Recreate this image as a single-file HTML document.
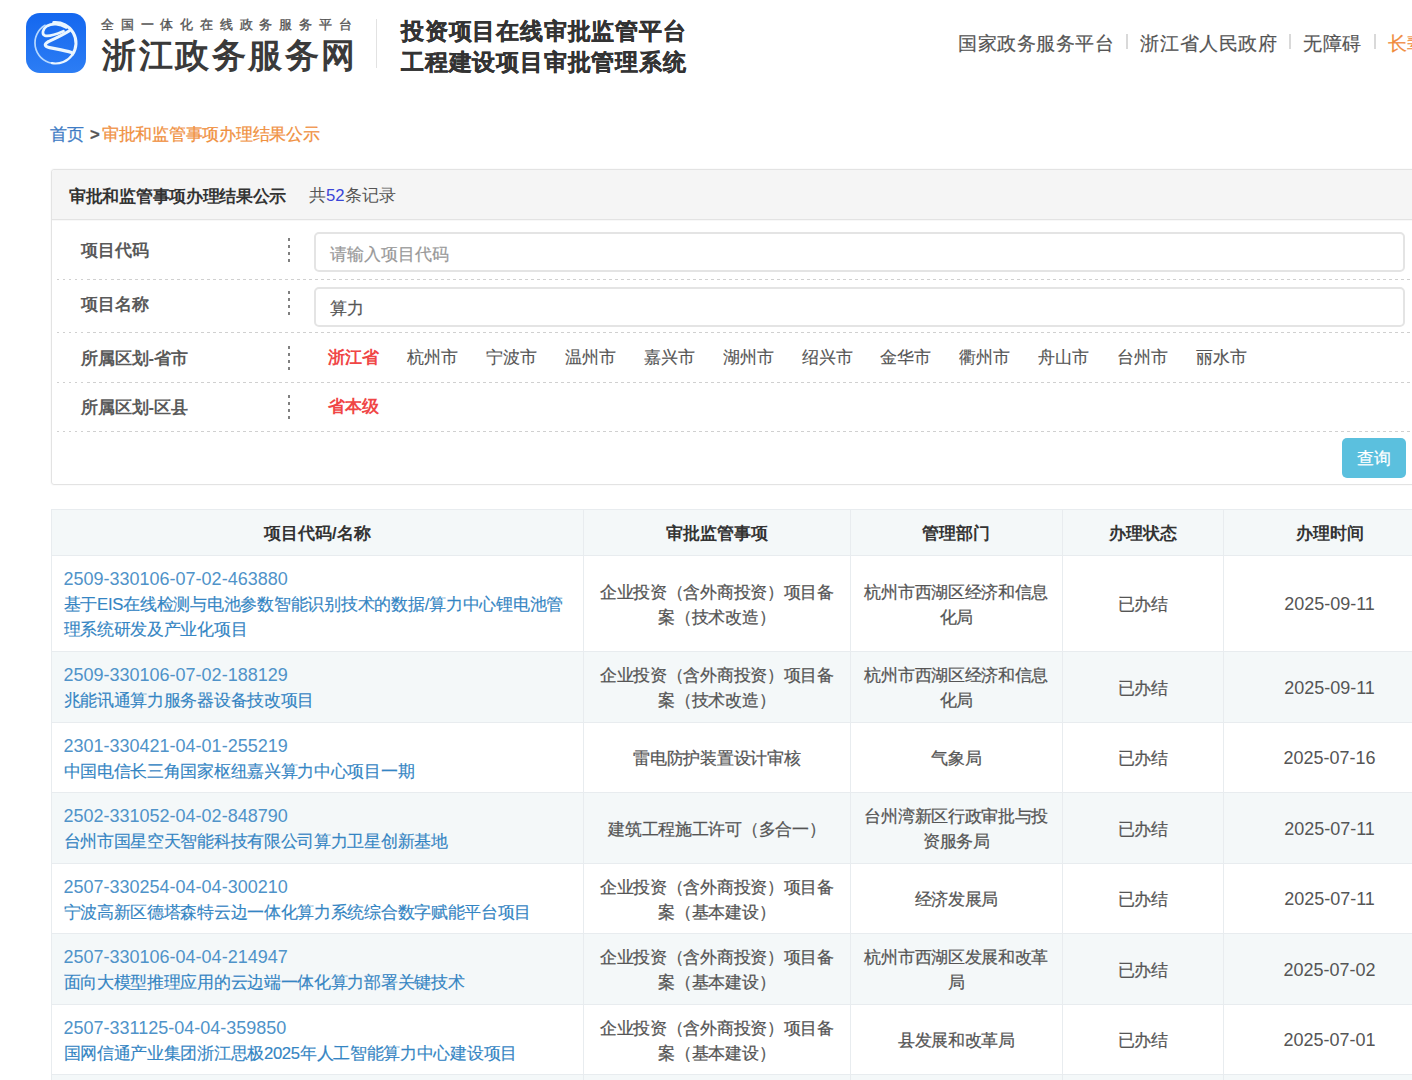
<!DOCTYPE html>
<html><head><meta charset="utf-8">
<style>
*{box-sizing:border-box;margin:0;padding:0}
html,body{width:1412px;height:1080px;overflow:hidden;background:#fff;font-family:"Liberation Sans",sans-serif;color:#555}
.abs{position:absolute;white-space:nowrap}
#logo{left:26px;top:13px;width:60px;height:60px}
#sub{left:101px;top:14px;font-size:13px;line-height:22px;letter-spacing:6.8px;color:#555;-webkit-text-stroke:0.35px #555}
#big{left:102px;top:32px;font-size:34px;line-height:46px;letter-spacing:2.5px;font-weight:bold;color:#3a3a3a}
#vdiv{left:376px;top:19px;width:1px;height:49px;background:#e2e2e2}
#t1{left:401px;top:14.5px;letter-spacing:0.8px;font-size:23px;-webkit-text-stroke:0.3px #333;line-height:32px;font-weight:bold;color:#333}
#t2{left:401px;top:46px;letter-spacing:0.8px;font-size:23px;-webkit-text-stroke:0.3px #333;line-height:32px;font-weight:bold;color:#333}
#nav{left:958px;top:30px;font-size:19px;letter-spacing:0.55px;-webkit-text-stroke:0.2px currentColor;line-height:28px;color:#555}
#nav .sep{display:inline-block;width:2px;height:15px;background:#d9d9d9;margin:0 12px 0 12px;vertical-align:1px}
#nav .o{color:#f08a3a}
#crumb{left:50px;top:122.5px;font-size:16.7px;line-height:24px;-webkit-text-stroke:0.25px currentColor}
#crumb .h{color:#3f7cc5}
#crumb .g{color:#555;font-weight:bold;margin:0 2px 0 6px}
#crumb .o{color:#f0913f;letter-spacing:-0.25px}
#panel{left:50.5px;top:168.5px;width:1372px;height:316.5px;border:1px solid #e3e3e3;border-radius:3px;box-shadow:0 0 2px rgba(0,0,0,.07)}
#ph{left:0;top:0;width:100%;height:50px;background:#f5f5f5;border-bottom:1px solid #e3e3e3;border-radius:3px 3px 0 0;box-shadow:0 1px 1px rgba(0,0,0,.03)}
#ph .t{position:absolute;left:17.5px;top:15px;letter-spacing:-0.3px;font-size:16.6px;line-height:24px;font-weight:bold;color:#333}
#ph .c{position:absolute;left:257.5px;top:14px;font-size:16.7px;line-height:24px;color:#555}
#ph .c b{font-weight:normal;color:#3b45d8}
.lab{font-size:16.7px;line-height:24px;font-weight:bold;color:#5a5a5a}
.vd{width:2px;background:repeating-linear-gradient(to bottom,#808080 0,#808080 3px,transparent 3px,transparent 7px)}
.hd{height:1px;background:repeating-linear-gradient(to right,#d0d0d0 0,#d0d0d0 2.5px,transparent 2.5px,transparent 6px)}
.inp{border:2px solid #e4e4e4;border-radius:5px;background:#fff}
.ph{font-size:17px;line-height:24px;color:#999;-webkit-text-stroke:0.2px currentColor}
.city{font-size:16.7px;line-height:24px;color:#555;-webkit-text-stroke:0.15px currentColor}
.red{color:#f04646;font-weight:bold;-webkit-text-stroke:0}
#btn{left:1342px;top:438px;width:64px;height:40px;background:#5bc0de;border-radius:5px;color:#fff;font-size:16.7px;line-height:42px;text-align:center;-webkit-text-stroke:0.2px #fff}
table{position:absolute;left:50.5px;top:509px;width:1385px;border-collapse:collapse;table-layout:fixed}
th,td{border:1px solid #e8ecef;text-align:center;vertical-align:middle}
th{height:46px;padding-top:2px;background:#f4f8f9;font-size:16.7px;font-weight:bold;color:#333}
td{font-size:16.7px;line-height:25px;color:#555;padding:2px 12px 0;-webkit-text-stroke:0.25px currentColor;letter-spacing:-0.3px}
tr.e td{background:#f4f8f9}
td.n{text-align:left;color:#3485c3;white-space:nowrap;-webkit-text-stroke:0.15px currentColor}
td.n .code{font-size:18px;color:#4f93c9;letter-spacing:0;-webkit-text-stroke:0}
td .d{font-size:18px;letter-spacing:0;-webkit-text-stroke:0}
</style></head><body>
<svg id="logo" class="abs" viewBox="0 0 60 60">
<defs><linearGradient id="lg" x1="0" y1="0" x2="0" y2="1"><stop offset="0" stop-color="#1467ef"/><stop offset="1" stop-color="#2c7df4"/></linearGradient></defs>
<rect x="0" y="0" width="60" height="60" rx="14" fill="url(#lg)"/>
<g fill="none" stroke="#eaf6ff" stroke-linecap="round">
<path d="M19.1 12.3 A20.5 20.5 0 0 0 25.94 50.19" stroke="#b5d8ff" stroke-width="1.7"/>
<path d="M25.94 50.19 A20.5 20.5 0 0 0 46.29 41.76" stroke-width="2.2"/>
<path d="M27.7 9.58 A20.5 20.5 0 0 1 46.29 41.76" stroke-width="3"/>
<path d="M40 14.5 C34 10.5,26 10,21 13 C16.5 16,15.5 21.5,19 22.6 C24 24,32 20.5,37.5 18.2" stroke-width="2.7"/>
<path d="M43 18 C36 22.5,28 26,22 28.8 C18 31,18.5 33.5,23.5 34.6 C31 36.2,39 37.5,45.5 39.5" stroke-width="3.2"/>
</g>
</svg>
<div id="sub" class="abs">全国一体化在线政务服务平台</div>
<div id="big" class="abs">浙江政务服务网</div>
<div id="vdiv" class="abs"></div>
<div id="t1" class="abs">投资项目在线审批监管平台</div>
<div id="t2" class="abs">工程建设项目审批管理系统</div>
<div id="nav" class="abs">国家政务服务平台<span class="sep"></span>浙江省人民政府<span class="sep"></span>无障碍<span class="sep"></span><span class="o">长辈版</span></div>
<div id="crumb" class="abs"><span class="h">首页</span><span class="g">&gt;</span><span class="o">审批和监管事项办理结果公示</span></div>

<div id="panel" class="abs">
 <div id="ph" class="abs"><span class="t">审批和监管事项办理结果公示</span><span class="c">共<b>52</b>条记录</span></div>
</div>
<!-- form rows (page coordinates) -->
<div class="abs lab" style="left:80.5px;top:239px">项目代码</div>
<div class="abs vd" style="left:288px;top:237.5px;height:25px"></div>
<div class="abs inp" style="left:313.5px;top:232px;width:1091px;height:40px"></div>
<div class="abs ph" style="left:330px;top:243px">请输入项目代码</div>
<div class="abs hd" style="left:57px;top:279px;width:1360px"></div>

<div class="abs lab" style="left:80.5px;top:293px">项目名称</div>
<div class="abs vd" style="left:288px;top:291px;height:25px"></div>
<div class="abs inp" style="left:313.5px;top:286.5px;width:1091px;height:40px"></div>
<div class="abs ph" style="left:330px;top:297px;color:#555">算力</div>
<div class="abs hd" style="left:57px;top:332px;width:1360px"></div>

<div class="abs lab" style="left:80.5px;top:347px">所属区划-省市</div>
<div class="abs vd" style="left:288px;top:345.5px;height:25px"></div>
<div class="abs city" style="left:327.5px;top:346px"><span class="red">浙江省</span></div>
<div class="abs city" style="left:406.5px;top:346px">杭州市</div>
<div class="abs city" style="left:485.5px;top:346px">宁波市</div>
<div class="abs city" style="left:564.5px;top:346px">温州市</div>
<div class="abs city" style="left:643.5px;top:346px">嘉兴市</div>
<div class="abs city" style="left:722.5px;top:346px">湖州市</div>
<div class="abs city" style="left:801.5px;top:346px">绍兴市</div>
<div class="abs city" style="left:880px;top:346px">金华市</div>
<div class="abs city" style="left:959px;top:346px">衢州市</div>
<div class="abs city" style="left:1038px;top:346px">舟山市</div>
<div class="abs city" style="left:1117px;top:346px">台州市</div>
<div class="abs city" style="left:1196px;top:346px">丽水市</div>
<div class="abs hd" style="left:57px;top:382px;width:1360px"></div>

<div class="abs lab" style="left:80.5px;top:396px">所属区划-区县</div>
<div class="abs vd" style="left:288px;top:394.5px;height:25px"></div>
<div class="abs city" style="left:327.5px;top:395px"><span class="red">省本级</span></div>
<div class="abs hd" style="left:57px;top:431px;width:1360px"></div>

<div id="btn" class="abs">查询</div>

<table>
<colgroup><col style="width:532.5px"><col style="width:266.7px"><col style="width:212.3px"><col style="width:160.6px"><col style="width:212.9px"></colgroup>
<tr><th>项目代码/名称</th><th>审批监管事项</th><th>管理部门</th><th>办理状态</th><th>办理时间</th></tr>
<tr style="height:96px"><td class="n"><span class="code">2509-330106-07-02-463880</span><br><span style="letter-spacing:-0.25px">基于EIS在线检测与电池参数智能识别技术的数据/算力中心锂电池管</span><br>理系统研发及产业化项目</td><td>企业投资（含外商投资）项目备案（技术改造）</td><td>杭州市西湖区经济和信息化局</td><td>已办结</td><td><span class="d">2025-09-11</span></td></tr>
<tr class="e" style="height:71px"><td class="n"><span class="code">2509-330106-07-02-188129</span><br>兆能讯通算力服务器设备技改项目</td><td>企业投资（含外商投资）项目备案（技术改造）</td><td>杭州市西湖区经济和信息化局</td><td>已办结</td><td><span class="d">2025-09-11</span></td></tr>
<tr style="height:70px"><td class="n"><span class="code">2301-330421-04-01-255219</span><br>中国电信长三角国家枢纽嘉兴算力中心项目一期</td><td>雷电防护装置设计审核</td><td>气象局</td><td>已办结</td><td><span class="d">2025-07-16</span></td></tr>
<tr class="e" style="height:71px"><td class="n"><span class="code">2502-331052-04-02-848790</span><br>台州市国星空天智能科技有限公司算力卫星创新基地</td><td>建筑工程施工许可（多合一）</td><td>台州湾新区行政审批与投资服务局</td><td>已办结</td><td><span class="d">2025-07-11</span></td></tr>
<tr style="height:70px"><td class="n"><span class="code">2507-330254-04-04-300210</span><br>宁波高新区德塔森特云边一体化算力系统综合数字赋能平台项目</td><td>企业投资（含外商投资）项目备案（基本建设）</td><td>经济发展局</td><td>已办结</td><td><span class="d">2025-07-11</span></td></tr>
<tr class="e" style="height:71px"><td class="n"><span class="code">2507-330106-04-04-214947</span><br>面向大模型推理应用的云边端一体化算力部署关键技术</td><td>企业投资（含外商投资）项目备案（基本建设）</td><td>杭州市西湖区发展和改革局</td><td>已办结</td><td><span class="d">2025-07-02</span></td></tr>
<tr style="height:70px"><td class="n"><span class="code">2507-331125-04-04-359850</span><br>国网信通产业集团浙江思极2025年人工智能算力中心建设项目</td><td>企业投资（含外商投资）项目备案（基本建设）</td><td>县发展和改革局</td><td>已办结</td><td><span class="d">2025-07-01</span></td></tr>
<tr class="e" style="height:70px"><td class="n"><span class="code">2507-330000-04-01-000000</span><br>浙江省算力项目</td><td>企业投资（含外商投资）项目备案（基本建设）</td><td>发展和改革局</td><td>已办结</td><td><span class="d">2025-06-30</span></td></tr>
</table>
</body></html>
